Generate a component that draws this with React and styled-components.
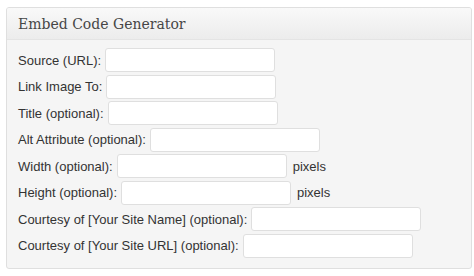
import React from "react";
import styled, { createGlobalStyle } from "styled-components";

const GlobalStyle = createGlobalStyle`
  body {
    margin: 0;
    background: #ffffff;
    font-family: "Liberation Sans", Arial, sans-serif;
  }
`;

const Page = styled.div`
  padding: 7px 2px 0 6px;
`;

const Box = styled.div`
  width: 464px;
  border: 1px solid #dfdfdf;
  border-radius: 3px;
  background: #f5f5f5;
  overflow: hidden;
`;

const Header = styled.div`
  height: 31px;
  border-bottom: 1px solid #e4e4e4;
  background: linear-gradient(to bottom, #f9f9f9, #ececec);
  display: flex;
  align-items: center;
  padding-left: 11px;
`;

const Title = styled.h3`
  margin: 0;
  font-family: "DejaVu Serif", "Liberation Serif", serif;
  font-weight: normal;
  font-size: 14px;
  color: #464646;
`;

const Body = styled.div`
  padding: 7px 0 9px 11px;
`;

const Row = styled.div`
  height: 26.5px;
  display: flex;
  align-items: center;
  font-size: 13px;
  color: #333333;
`;

const Label = styled.label`
  margin-right: 4px;
`;

const Field = styled.input`
  box-sizing: border-box;
  width: 170px;
  height: 24px;
  margin: 0;
  border: 1px solid #dfdfdf;
  border-radius: 3px;
  background: #ffffff;
  outline: none;
`;

const Unit = styled.span`
  margin-left: 6px;
`;

const fields = [
  { label: "Source (URL):" },
  { label: "Link Image To:" },
  { label: "Title (optional):" },
  { label: "Alt Attribute (optional):" },
  { label: "Width (optional):", unit: "pixels" },
  { label: "Height (optional):", unit: "pixels" },
  { label: "Courtesy of [Your Site Name] (optional):" },
  { label: "Courtesy of [Your Site URL] (optional):" },
];

export default function App() {
  return (
    <>
      <GlobalStyle />
      <Page>
        <Box>
          <Header>
            <Title>Embed Code Generator</Title>
          </Header>
          <Body>
            {fields.map((f) => (
              <Row key={f.label}>
                <Label>{f.label}</Label>
                <Field type="text" />
                {f.unit && <Unit>{f.unit}</Unit>}
              </Row>
            ))}
          </Body>
        </Box>
      </Page>
    </>
  );
}
